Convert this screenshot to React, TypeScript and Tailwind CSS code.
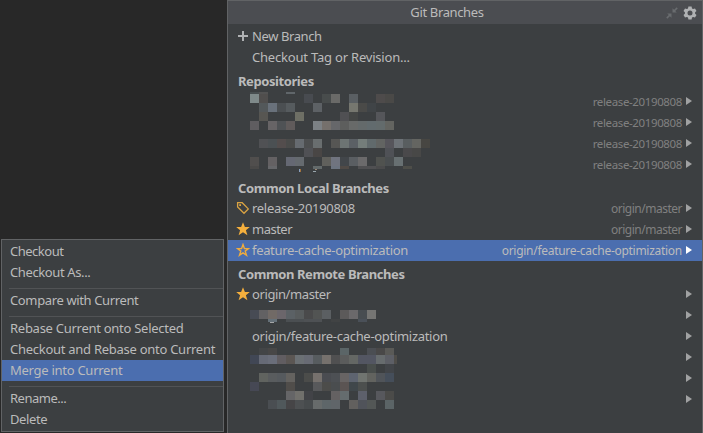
import React from "react";

type Cells = Record<number, string>;
type Strip = { y: number; h: number; cells: Cells };

const CELL = 9;

const repositoryStrips: Strip[] = [
  { y: 1, h: 2, cells: { 0: "#484e50", 1: "#535353", 4: "#60666a" } },
  { y: 3, h: 9, cells: { 0: "#7f8a8a", 1: "#504e4d", 6: "#484b50", 8: "#484c4c", 9: "#6a6a68", 11: "#5a5f63", 14: "#4e4b4b", 15: "#4a4947" } },
  { y: 12, h: 9, cells: { 1: "#53585a", 2: "#69717b", 3: "#4b4f52", 4: "#565b5e", 7: "#5d6165", 11: "#76776f", 12: "#4a4a48", 13: "#404447" } },
  { y: 21, h: 9, cells: { 1: "#575652", 5: "#6e6f65", 10: "#505053", 11: "#444645", 14: "#55565a" } },
  { y: 30, h: 9, cells: { 0: "#5f5d60", 2: "#676466", 3: "#4f5255", 4: "#605b5b", 7: "#7c8185", 8: "#75706c", 9: "#66676a", 10: "#5d5e5d", 11: "#686a69", 12: "#646a6b", 13: "#626b6e", 14: "#636b6c", 15: "#636460" } },
  { y: 48, h: 9, cells: { 1: "#505154", 2: "#4b5053", 3: "#534d4d", 4: "#4a4b4a", 5: "#666b70", 6: "#4d4f50", 7: "#696e6f", 9: "#565654", 10: "#6d7473", 11: "#5b6065", 12: "#747d7a", 13: "#616a6c", 14: "#626462", 15: "#56555b", 16: "#6d7277", 17: "#595e60", 18: "#646561", 19: "#474642" } },
  { y: 57, h: 9, cells: { 6: "#505155", 7: "#494645", 15: "#4f5156", 17: "#4a494b", 18: "#484847" } },
  { y: 66, h: 9, cells: { 0: "#504e4d", 2: "#646163", 4: "#656873", 5: "#656a6f", 8: "#60605c", 9: "#70747f", 10: "#42464a", 11: "#5a5e62", 12: "#6b6a6b", 14: "#50524f", 15: "#4a4e50", 16: "#687072" } },
  { y: 75, h: 3, cells: { 0: "#4a4948", 2: "#66676a", 7: "#636a6b", 9: "#6c7480", 10: "#504a46", 12: "#505052", 13: "#505052", 14: "#4b4b4c", 17: "#4e4e49" } },
];

const remoteStrips: Strip[] = [
  { y: 26, h: 9, cells: { 0: "#474b54", 1: "#626163", 2: "#716a66", 3: "#6b666b", 4: "#5b6165", 5: "#585c5d", 6: "#4a4a4b", 7: "#525453", 8: "#5b5f62", 10: "#5c5a5a", 11: "#6b696b", 12: "#484d51", 13: "#757573" } },
  { y: 35, h: 3, cells: { 2: "#657078", 4: "#4b4f52", 5: "#4b4f52", 6: "#4e5154", 7: "#4e5154", 9: "#414344", 12: "#4a5058" } },
  { y: 64, h: 7, cells: { 1: "#434547", 2: "#484747", 10: "#5b6567", 13: "#4b4e53", 14: "#494848", 15: "#5a5a57" } },
  { y: 71, h: 9, cells: { 0: "#414755", 1: "#666a76", 2: "#6a6e7a", 3: "#615d61", 4: "#5b5653", 5: "#6b7074", 6: "#686b74", 7: "#575c5f", 8: "#76716d", 9: "#505051", 10: "#5b5c5c", 11: "#646764", 12: "#535662", 13: "#535662", 14: "#676c6e", 15: "#5d5f66" } },
  { y: 80, h: 9, cells: { 13: "#494e4c", 15: "#424549" } },
  { y: 89, h: 9, cells: { 1: "#60635f", 2: "#595c5e", 3: "#565a5e", 4: "#64625f", 6: "#4b4c4a", 7: "#76716d", 8: "#4a4c51", 9: "#4d5054", 10: "#686464", 11: "#5e6470", 12: "#707470", 13: "#62635f", 14: "#505459", 15: "#454e5a" } },
  { y: 98, h: 9, cells: { 0: "#464854", 4: "#504d4a", 7: "#58595b", 8: "#4c4c4a", 9: "#4a4d4f", 10: "#5b5453", 11: "#40474b", 12: "#4c4f4e" } },
  { y: 107, h: 9, cells: { 4: "#656567", 5: "#71706c", 6: "#424347", 9: "#646162", 10: "#656c6e", 12: "#5d606b", 14: "#57585d", 15: "#4b4b49" } },
  { y: 116, h: 9, cells: { 2: "#4a4e52", 3: "#50585b", 4: "#464547", 5: "#4d5052", 6: "#474b4d", 7: "#676b6b", 8: "#5e6669", 9: "#606569", 11: "#62605e", 12: "#50535a", 13: "#535756", 15: "#5b6466" } },
];

function Mosaic({ strips, children }: { strips: Strip[]; children?: React.ReactNode }) {
  return (
    <svg className="pointer-events-none absolute top-0 left-[22px]" width="190" height="126" shapeRendering="crispEdges">
      {strips.map((s) =>
        Object.entries(s.cells).map(([col, fill]) => (
          <rect key={`${s.y}-${col}`} x={Number(col) * CELL} y={s.y} width={CELL} height={s.h} fill={fill} />
        )),
      )}
      {children}
    </svg>
  );
}

function StarIcon({ filled = false }: { filled?: boolean }) {
  return (
    <svg width="14" height="14" viewBox="0 0 14 14">
      {filled ? (
        <path d="M7 .2 8.9 5H13.8L9.9 8.2 11.4 13.2 7 10.2 2.6 13.2 4.1 8.2 .2 5H5.1Z" fill="#f4af3d" />
      ) : (
        <path d="M7 1.6 8.4 5.6H12.5L9.2 8.1 10.5 12.2 7 9.8 3.5 12.2 4.8 8.1 1.5 5.6H5.6Z" fill="none" stroke="#eeab3e" strokeWidth="1.4" />
      )}
    </svg>
  );
}

function TagIcon() {
  return (
    <svg width="14" height="14" viewBox="0 0 14 14" fill="none" stroke="#d9a343" strokeWidth="1.3">
      <path d="M1.6 1.7H6.2L12.3 7.9 8 12.3 1.6 5.9Z" />
      <rect x="3.2" y="3.2" width="1.8" height="1.8" fill="#d9a343" stroke="none" />
    </svg>
  );
}

function PlusIcon() {
  return (
    <svg width="14" height="14" viewBox="0 0 14 14" shapeRendering="crispEdges">
      <path d="M6 2H8V6H12V8H8V12H6V8H2V6H6Z" fill="#afb1b3" />
    </svg>
  );
}

function CollapseIcon() {
  return (
    <svg className="mt-px" width="12" height="12" viewBox="0 0 12 12" fill="#696c6f">
      <path d="M6.5 1.2V5.5H10.8L9.2 4 11.8 1.4 10.7.3 8.1 2.8Z" />
      <path d="M5.5 10.8V6.5H1.2L2.8 8 .2 10.6 1.3 11.7 3.9 9.2Z" />
    </svg>
  );
}

function GearIcon() {
  return (
    <svg className="mt-px ml-[5px]" width="14" height="14" viewBox="0 0 14 14">
      <path
        fillRule="evenodd"
        fill="#afb1b3"
        d="M5.4.5H8.6L9 2.4 10.1 3 12 2.4 13.5 5 12.1 6.3V7.7L13.5 9 12 11.6 10.1 11 9 11.6 8.6 13.5H5.4L5 11.6 3.9 11 2 11.6.5 9 1.9 7.7V6.3L.5 5 2 2.4 3.9 3 5 2.4ZM7 4.5A2.5 2.5 0 1 0 7 9.5 2.5 2.5 0 1 0 7 4.5Z"
      />
    </svg>
  );
}

function Arrow({ selected = false }: { selected?: boolean }) {
  return (
    <svg className="ml-1 shrink-0" width="6" height="8" viewBox="0 0 6 8">
      <path d="M0 0 6 4 0 8Z" fill={selected ? "#ffffff" : "#a0a1a2"} />
    </svg>
  );
}

type RowProps = {
  icon?: React.ReactNode;
  label?: string;
  labelClass?: string;
  remote?: string;
  remoteClass?: string;
  arrow?: boolean;
  selected?: boolean;
};

function Row({ icon, label, labelClass = "", remote, remoteClass = "", arrow = true, selected = false }: RowProps) {
  return (
    <div className={`flex h-[21px] items-center pr-[10px] pb-px pl-2 ${selected ? "bg-[#4b6eaf]" : ""}`}>
      <span className="w-4 shrink-0">{icon}</span>
      <span className={labelClass}>{label}</span>
      <span className={`ml-auto pt-px leading-[17px] ${selected ? "text-[#bbbbbb]" : "text-[#808080]"} ${remoteClass}`}>{remote}</span>
      {arrow && <Arrow selected={selected} />}
    </div>
  );
}

function Title({ children, className = "" }: { children: string; className?: string }) {
  return (
    <div className="flex h-[23px] items-center pt-[3px] pl-[10px] font-bold">
      <span className={className}>{children}</span>
    </div>
  );
}

function MenuItem({ children, selected = false, className = "" }: { children: string; selected?: boolean; className?: string }) {
  return (
    <div className={`flex h-[21px] items-center pb-px pl-2 ${selected ? "bg-[#4b6eaf]" : ""}`}>
      <span className={className}>{children}</span>
    </div>
  );
}

function Separator() {
  return (
    <div className="h-[7px] pt-[5px] pl-[7px]">
      <div className="h-px bg-[#515355]" />
    </div>
  );
}

export default function App() {
  return (
    <div className="flex h-[433px] w-[703px] overflow-hidden bg-[#282828] font-['Noto_Sans','Open_Sans',sans-serif] text-[13px] leading-[18px] whitespace-nowrap text-[#bbbbbb]">
      <aside className="flex w-[227px] flex-col justify-end pb-px pl-px">
        <div className="h-[193px] w-[223px] border border-[#616365] bg-[#3c3f41] pt-px">
          <MenuItem className="tracking-[-0.5px]">Checkout</MenuItem>
          <MenuItem className="tracking-[-0.38px]">Checkout As...</MenuItem>
          <Separator />
          <MenuItem className="tracking-[-0.37px]">Compare with Current</MenuItem>
          <Separator />
          <MenuItem className="tracking-[-0.27px]">Rebase Current onto Selected</MenuItem>
          <MenuItem className="tracking-[-0.27px]">Checkout and Rebase onto Current</MenuItem>
          <MenuItem selected className="tracking-[-0.27px]">Merge into Current</MenuItem>
          <Separator />
          <MenuItem className="tracking-[-0.5px]">Rename...</MenuItem>
          <MenuItem className="tracking-[-0.4px]">Delete</MenuItem>
        </div>
      </aside>

      <main className="w-[476px] border-x border-t border-[#616365] bg-[#3c3f41]">
        <header className="flex h-[23px] items-center bg-[#4b4d51] pr-[5px]">
          <h1 className="flex-1 pb-px text-center tracking-[-0.36px]">Git Branches</h1>
          <CollapseIcon />
          <GearIcon />
        </header>

        <section className="pt-[2px]">
          <Row icon={<PlusIcon />} label="New Branch" labelClass="tracking-[-0.4px]" arrow={false} />
          <Row label="Checkout Tag or Revision..." labelClass="tracking-[-0.2px]" arrow={false} />
        </section>

        <Title className="tracking-[-0.42px]">Repositories</Title>
        <section className="relative">
          <Row remote="release-20190808" remoteClass="text-[11.5px] tracking-[-0.37px]" />
          <Row remote="release-20190808" remoteClass="text-[11.5px] tracking-[-0.37px]" />
          <Row remote="release-20190808" remoteClass="text-[11.5px] tracking-[-0.37px]" />
          <Row remote="release-20190808" remoteClass="text-[11.5px] tracking-[-0.37px]" />
          <Mosaic strips={repositoryStrips}>
            <rect x="49" y="78" width="1" height="3" fill="#8ba0bd" />
            <rect x="50" y="78" width="1" height="3" fill="#a0713f" />
            <rect x="65" y="78" width="2" height="1" fill="#9c8a78" />
            <rect x="63" y="80" width="3" height="1" fill="#9aa7ad" />
          </Mosaic>
        </section>

        <Title className="tracking-[-0.38px]">Common Local Branches</Title>
        <section>
          <Row icon={<TagIcon />} label="release-20190808" labelClass="tracking-[-0.3px]" remote="origin/master" remoteClass="text-[12px] tracking-[-0.5px]" />
          <Row icon={<StarIcon filled />} label="master" labelClass="tracking-[-0.5px]" remote="origin/master" remoteClass="text-[12px] tracking-[-0.5px]" />
          <Row
            icon={<StarIcon />}
            label="feature-cache-optimization"
            labelClass="tracking-[-0.33px]"
            remote="origin/feature-cache-optimization"
            remoteClass="text-[12px] tracking-[-0.28px]"
            selected
          />
        </section>

        <Title className="tracking-[-0.41px]">Common Remote Branches</Title>
        <section className="relative">
          <Row icon={<StarIcon filled />} label="origin/master" labelClass="tracking-[-0.4px]" />
          <Row />
          <Row label="origin/feature-cache-optimization" labelClass="tracking-[-0.3px]" />
          <Row />
          <Row />
          <Row />
          <Mosaic strips={remoteStrips}>
            <rect x="144" y="71" width="3" height="9" fill="#4f4d49" />
            <rect x="20" y="38" width="4" height="1" fill="#a5a7a8" />
          </Mosaic>
        </section>
      </main>
    </div>
  );
}
